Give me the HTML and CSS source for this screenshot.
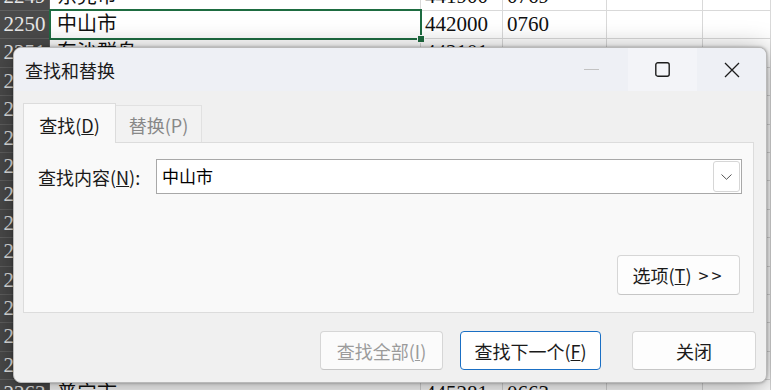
FILE: index.html
```html
<!DOCTYPE html>
<html lang="zh-CN">
	<head>
		<title>查找和替换</title>
		<meta charset="utf-8">
		<link rel="stylesheet" href="styles.css">
	</head>

	<body>
		<div class="sheet">
			<div class="row"><div class="hdr">2249</div><div class="txt">东莞市</div><div>441900</div><div>0769</div><div></div><div></div></div>
			<div class="row"><div class="hdr">2250</div><div class="txt sel">中山市</div><div>442000</div><div>0760</div><div></div><div></div></div>
			<div class="row"><div class="hdr">2251</div><div class="txt">东沙群岛</div><div>442101</div><div></div><div></div><div></div></div>
			<div class="row"><div class="hdr">2252</div><div class="txt">潮州市</div><div>445100</div><div>0768</div><div></div><div></div></div>
			<div class="row"><div class="hdr">2253</div><div class="txt">湘桥区</div><div>445102</div><div>0768</div><div></div><div></div></div>
			<div class="row"><div class="hdr">2254</div><div class="txt">潮安区</div><div>445103</div><div>0768</div><div></div><div></div></div>
			<div class="row"><div class="hdr">2255</div><div class="txt">饶平县</div><div>445122</div><div>0768</div><div></div><div></div></div>
			<div class="row"><div class="hdr">2256</div><div class="txt">揭阳市</div><div>445200</div><div>0663</div><div></div><div></div></div>
			<div class="row"><div class="hdr">2257</div><div class="txt">榕城区</div><div>445202</div><div>0663</div><div></div><div></div></div>
			<div class="row"><div class="hdr">2258</div><div class="txt">揭东区</div><div>445203</div><div>0663</div><div></div><div></div></div>
			<div class="row"><div class="hdr">2259</div><div class="txt">揭西县</div><div>445222</div><div>0663</div><div></div><div></div></div>
			<div class="row"><div class="hdr">2260</div><div class="txt">惠来县</div><div>445224</div><div>0663</div><div></div><div></div></div>
			<div class="row"><div class="hdr">2261</div><div class="txt">揭阳市辖区</div><div>445201</div><div>0663</div><div></div><div></div></div>
			<div class="row"><div class="hdr">2262</div><div class="txt">空港区</div><div>445223</div><div>0663</div><div></div><div></div></div>
			<div class="row"><div class="hdr">2263</div><div class="txt">普宁市</div><div>445281</div><div>0663</div><div></div><div></div></div>
		</div>

		<div class="dialog">
			<div class="titlebar">
				<span class="title">查找和替换</span>
				<div class="controls">
					<span class="ctl"><span class="minline"></span></span>
					<span class="ctl hover">
						<svg width="15" height="15" viewBox="0 0 15 15"><rect x="0.8" y="0.8" width="13.4" height="13.4" rx="2" fill="none" stroke="#1c1c1c" stroke-width="1.4"/></svg>
					</span>
					<span class="ctl">
						<svg width="16" height="16" viewBox="0 0 16 16"><path d="M1 1 L15 15 M15 1 L1 15" stroke="#1c1c1c" stroke-width="1.3" fill="none"/></svg>
					</span>
				</div>
			</div>

			<div class="dbody">
				<div class="tabs">
					<div class="tab active">查找(<u>D</u>)</div>
					<div class="tab">替换(P)</div>
				</div>
				<div class="panel">
					<div class="field">
						<label class="lbl">查找内容(<u>N</u>):</label>
						<div class="combo">
							<span class="value">中山市</span>
							<span class="drop"><svg width="11" height="6" viewBox="0 0 11 6"><path d="M0.5 0.5 L5.5 5.3 L10.5 0.5" stroke="#555" stroke-width="1" fill="none"/></svg></span>
						</div>
					</div>
					<div class="optrow"><button class="btn opt">选项(<u>T</u>) <span class="arrows">&gt;&gt;</span></button></div>
				</div>
				<div class="footer">
					<button class="btn findall" disabled>查找全部(<u>I</u>)</button>
					<button class="btn findnext">查找下一个(<u>F</u>)</button>
					<button class="btn close">关闭</button>
				</div>
			</div>
		</div>
	</body>
</html>
```

FILE: styles.css
```css
body {
	margin: 0;
	width: 771px;
	height: 390px;
	overflow: hidden;
	background: #fff;
	font-family: "Noto Sans CJK SC", sans-serif;
	color: #1a1a1a;
}

/* spreadsheet behind the dialog */
.sheet {
	margin-top: -17.4px;
}

.row {
	display: grid;
	grid-template-columns: 50px 371px 82px 104px 96px 1fr;
	height: 28.4px;
}

.row > div {
	box-sizing: border-box;
	border-right: 1px solid #d9d9d9;
	border-bottom: 1px solid #d9d9d9;
	font: 21px/27px "Liberation Serif", "Noto Sans CJK SC", serif;
	color: #111;
	padding-left: 4px;
	white-space: nowrap;
	overflow: hidden;
}

.row > .hdr {
	background: #4a4a4a;
	color: #e6e6e6;
	border-color: #5f5f5f;
	text-align: center;
	padding-left: 0;
}

.row > .txt {
	padding-left: 7px;
	font-size: 20px;
}

.row > .sel {
	position: relative;
	overflow: visible;
}

.sel::after {
	content: "";
	position: absolute;
	left: -1px;
	top: -2px;
	right: -2px;
	bottom: -2px;
	border: 2px solid #1e6c41;
}

.sel::before {
	content: "";
	position: absolute;
	right: -5px;
	bottom: -5px;
	width: 6px;
	height: 6px;
	background: #1e6c41;
	border: 1px solid #fff;
	z-index: 2;
}

/* dialog */
.dialog {
	position: absolute;
	left: 13px;
	top: 47px;
	width: 754px;
	height: 336px;
	box-sizing: border-box;
	border: 1px solid #b9b9b9;
	border-radius: 8px;
	overflow: hidden;
	background: #f0f0f0;
	box-shadow: 0 0 3px rgba(0,0,0,0.35), 0 4px 28px rgba(0,0,0,0.4);
	z-index: 10;
}

.titlebar {
	height: 43px;
	display: flex;
	align-items: center;
	background: #eef0f5;
}

.title {
	padding-left: 11px;
	font-size: 18px;
	line-height: 24px;
}

.controls {
	margin-left: auto;
	display: flex;
	height: 100%;
}

.ctl {
	width: 69px;
	height: 100%;
	display: flex;
	align-items: center;
	justify-content: center;
}

.ctl.hover {
	background: #f3f4f8;
}

.minline {
	width: 15px;
	height: 1px;
	background: #c2c2c2;
	margin-right: 4px;
}

.dbody {
	padding: 12px 12px 0 9px;
}

.tabs {
	display: flex;
	align-items: flex-end;
	height: 39px;
}

.tab {
	box-sizing: border-box;
	font-size: 18px;
	line-height: 24px;
	display: flex;
	align-items: center;
	justify-content: center;
}

.tab.active {
	width: 93px;
	height: 40px;
	margin-bottom: -1px;
	background: #f9f9f9;
	border: 1px solid #dcdcdc;
	border-bottom: none;
	position: relative;
	z-index: 1;
	padding-top: 2px;
}

.tab:not(.active) {
	width: 86px;
	height: 37px;
	background: #f2f2f2;
	border: 1px solid #e1e1e1;
	border-left: none;
	border-bottom: none;
	color: #888;
	padding-top: 2px;
}

.panel {
	box-sizing: border-box;
	height: 171px;
	border: 1px solid #dcdcdc;
	background: #f9f9f9;
	padding: 16px 11px 17px 14px;
	display: flex;
	flex-direction: column;
	justify-content: space-between;
}

.field {
	display: flex;
	align-items: center;
}

.lbl {
	width: 118px;
	font-size: 18px;
	line-height: 24px;
}

.combo {
	flex: 1;
	height: 35px;
	box-sizing: border-box;
	border: 1px solid #a8a8a8;
	background: #fff;
	display: flex;
	align-items: center;
}

.value {
	padding-left: 5px;
	font-size: 17px;
	line-height: 24px;
	color: #000;
	margin-top: -2px;
}

.drop {
	margin-left: auto;
	margin-right: 1px;
	width: 27px;
	height: 31px;
	box-sizing: border-box;
	border: 1px solid #d6d6d6;
	border-radius: 3px;
	display: flex;
	align-items: center;
	justify-content: center;
}

.optrow {
	display: flex;
	justify-content: flex-end;
	padding-right: 2px;
}

.btn {
	box-sizing: border-box;
	height: 39px;
	font-family: "Noto Sans CJK SC", sans-serif;
	font-size: 18px;
	line-height: 24px;
	color: #1a1a1a;
	background: #fdfdfd;
	border: 1px solid #d6d6d6;
	border-bottom-color: #c6c6c6;
	border-radius: 4px;
	padding: 0;
}

.btn.opt {
	width: 123px;
	height: 40px;
}

.arrows {
	letter-spacing: 3px;
	margin-left: 3px;
}

.footer {
	margin-top: 18px;
	margin-right: -2px;
	display: flex;
	justify-content: flex-end;
}

.findall {
	width: 123px;
	color: #9b9b9b;
	background: #fbfbfb;
}

.findnext {
	width: 141px;
	margin-left: 17px;
	border: 1px solid #1a6fc4;
	background: #fff;
}

.close {
	width: 124px;
	margin-left: 31px;
}
```
